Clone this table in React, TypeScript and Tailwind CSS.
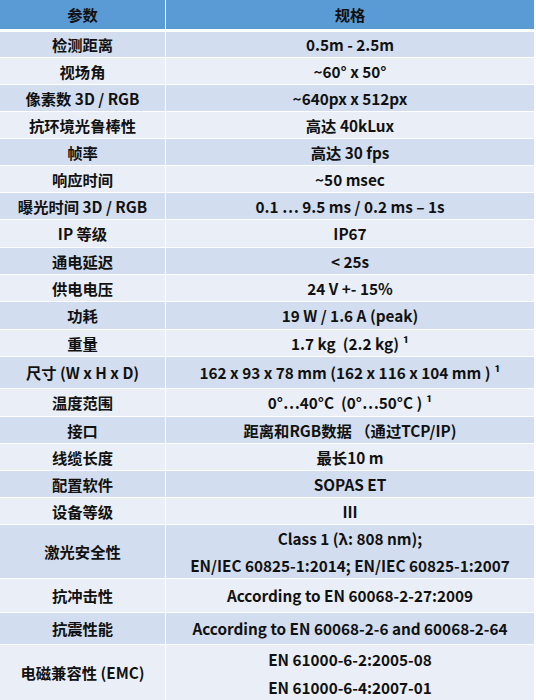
const FONT = { fontFamily: '"Noto Sans CJK SC", "Noto Sans", sans-serif' }

type Row = { label: string; value: React.ReactNode; h: string }

const ROWS: Row[] = [
  { label: '检测距离', value: '0.5m - 2.5m', h: 'h-[25px]' },
  { label: '视场角', value: '~60° x 50°', h: 'h-[26px]' },
  { label: '像素数 3D / RGB', value: '~640px x 512px', h: 'h-[26px]' },
  { label: '抗环境光鲁棒性', value: '高达 40kLux', h: 'h-[26px]' },
  { label: '帧率', value: '高达 30 fps', h: 'h-[26px]' },
  { label: '响应时间', value: '~50 msec', h: 'h-[26px]' },
  { label: '曝光时间 3D / RGB', value: '0.1 ⋯ 9.5 ms / 0.2 ms – 1s', h: 'h-[26px]' },
  { label: 'IP 等级', value: 'IP67', h: 'h-[27px]' },
  { label: '通电延迟', value: '< 25s', h: 'h-[26px]' },
  { label: '供电电压', value: '24 V +- 15%', h: 'h-[26px]' },
  { label: '功耗', value: '19 W / 1.6 A (peak)', h: 'h-[27px]' },
  { label: '重量', value: <>1.7 kg&nbsp;&nbsp;(2.2 kg) ¹</>, h: 'h-[26px]' },
  { label: '尺寸 (W x H x D)', value: '162 x 93 x 78 mm (162 x 116 x 104 mm ) ¹', h: 'h-[31px]' },
  { label: '温度范围', value: <>0°⋯40°C&nbsp;&nbsp;(0°⋯50°C ) ¹</>, h: 'h-[27px]' },
  { label: '接口', value: '距离和RGB数据 （通过TCP/IP)', h: 'h-[26px]' },
  { label: '线缆长度', value: '最长10 m', h: 'h-[26px]' },
  { label: '配置软件', value: 'SOPAS ET', h: 'h-[26px]' },
  { label: '设备等级', value: 'III', h: 'h-[26px]' },
  {
    label: '激光安全性',
    value: (
      <div className="flex flex-col items-center leading-[27px]">
        <span>Class 1 (λ: 808 nm);</span>
        <span>EN/IEC 60825-1:2014; EN/IEC 60825-1:2007</span>
      </div>
    ),
    h: 'h-[53px]',
  },
  { label: '抗冲击性', value: 'According to EN 60068-2-27:2009', h: 'h-[33px]' },
  { label: '抗震性能', value: 'According to EN 60068-2-6 and 60068-2-64', h: 'h-[31px]' },
  {
    label: '电磁兼容性 (EMC)',
    value: (
      <div className="flex flex-col items-center leading-[28px]">
        <span>EN 61000-6-2:2005-08</span>
        <span>EN 61000-6-4:2007-01</span>
      </div>
    ),
    h: 'h-[55px]',
  },
]

export default function App() {
  return (
    <div className="w-[536px] h-[700px] bg-white overflow-hidden text-[15.3px] font-bold text-[#111]" style={FONT}>
      <div className="w-[534px]">
        <div className="flex h-[32px] border-b-[3px] border-white bg-[#5b9bd5]">
          <div className="w-[166px] border-r border-white flex items-center justify-center">参数</div>
          <div className="flex-1 flex items-center justify-center">规格</div>
        </div>
        {ROWS.map((r, i) => (
          <div
            key={r.label}
            className={`flex border-b border-white ${i % 2 === 0 ? 'bg-[#d2deef]' : 'bg-[#eaeff7]'}`}
          >
            <div className={`${r.h} w-[166px] border-r border-white flex items-center justify-center whitespace-nowrap`}>
              {r.label}
            </div>
            <div className={`${r.h} flex-1 flex items-center justify-center whitespace-nowrap`}>{r.value}</div>
          </div>
        ))}
      </div>
    </div>
  )
}
